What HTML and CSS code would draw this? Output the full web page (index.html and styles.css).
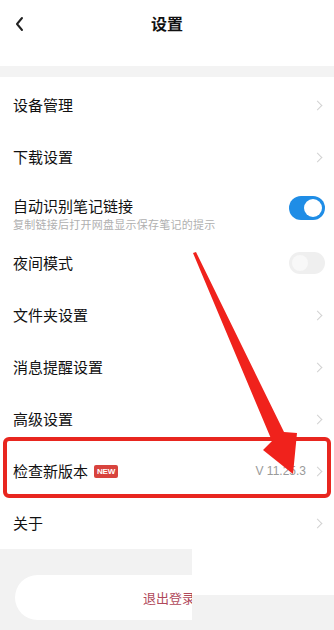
FILE: index.html
```html
<!DOCTYPE html>
<html lang="zh">
<head>
<meta charset="utf-8">
<link rel="stylesheet" href="styles.css">
</head>
<body>
<div class="page">
  <header class="header">
    <svg class="back" width="12" height="16" viewBox="0 0 12 16"><path d="M8 2 L3 8 L8 14" fill="none" stroke="#222" stroke-width="2" stroke-linecap="round" stroke-linejoin="round"/></svg>
    <div class="title">设置</div>
  </header>
  <div class="band"></div>
  <ul class="list">
    <li class="row"><span class="label">设备管理</span><span class="chev"></span></li>
    <li class="row"><span class="label">下载设置</span><span class="chev"></span></li>
    <li class="row row-two">
      <div class="texts">
        <span class="label">自动识别笔记链接</span>
        <span class="sub">复制链接后打开网盘显示保存笔记的提示</span>
      </div>
      <span class="toggle on"><span class="knob"></span></span>
    </li>
    <li class="row"><span class="label">夜间模式</span><span class="toggle off"><span class="knob"></span></span></li>
    <li class="row"><span class="label">文件夹设置</span><span class="chev"></span></li>
    <li class="row"><span class="label">消息提醒设置</span><span class="chev"></span></li>
    <li class="row"><span class="label">高级设置</span><span class="chev"></span></li>
    <li class="row"><span class="label">检查新版本</span><span class="badge">NEW</span><span class="version">V 11.25.3</span><span class="chev"></span></li>
    <li class="row"><span class="label">关于</span><span class="chev"></span></li>
  </ul>
  <div class="footer">
    <div class="logout">退出登录</div>
  </div>
  <div class="patch"></div>
  <div class="highlight"></div>
  <svg class="arrow" width="334" height="630" viewBox="0 0 334 630">
    <polygon points="193,253 196,252 284,432 297,433 293,474 263,450 272,441" fill="#f0221c"/>
  </svg>
</div>
</body>
</html>
```
FILE: styles.css
```css
* { box-sizing: border-box; }
html, body { margin: 0; padding: 0; }
body {
  background: #fff;
  font-family: "Noto Sans CJK SC", "Noto Sans", sans-serif;
  color: #1a1a1a;
}
.page {
  position: relative;
  width: 334px;
  height: 630px;
  overflow: hidden;
  display: flex;
  flex-direction: column;
}
.header {
  height: 66px;
  position: relative;
  display: flex;
  align-items: flex-start;
  justify-content: center;
  padding-top: 10px;
}
.back {
  position: absolute;
  left: 14px;
  top: 16px;
}
.title {
  font-size: 16px;
  font-weight: 700;
  line-height: 26px;
  color: #111;
}
.band {
  height: 11px;
  background: #f3f3f3;
}
.list {
  list-style: none;
  margin: 0;
  padding: 2px 0 0 0;
}
.row {
  height: 52px;
  display: flex;
  align-items: center;
  padding: 0 10px 0 13px;
}
.row-two {
  height: 54px;
  align-items: flex-start;
  padding-top: 13px;
}
.texts {
  display: flex;
  flex-direction: column;
  flex: 1;
}
.label {
  font-size: 15px;
  line-height: 20px;
  color: #111;
}
.row > .label { flex: 0 0 auto; }
.sub {
  font-size: 11px;
  line-height: 14px;
  color: #b0b0b0;
  margin-top: 1px;
  letter-spacing: 0.25px;
}
.chev {
  margin-left: auto;
  width: 7px;
  height: 7px;
  border-top: 1.3px solid #d2d2d2;
  border-right: 1.3px solid #d2d2d2;
  transform: rotate(45deg);
  margin-right: 3px;
}
.version + .chev { margin-left: 8px; }
.badge {
  margin-left: 6px;
  background: #d8433d;
  color: #fff;
  font-family: "Liberation Sans", sans-serif;
  font-size: 8px;
  font-weight: 700;
  line-height: 13px;
  padding: 0 3px;
  border-radius: 2px;
  letter-spacing: -0.2px;
}
.version {
  margin-left: auto;
  font-size: 12px;
  color: #9a9a9a;
  font-family: "Liberation Sans", sans-serif;
}
.toggle {
  margin-left: auto;
  width: 36px;
  height: 24px;
  border-radius: 12px;
  display: flex;
  align-items: center;
  padding: 0 3px;
  margin-right: -1px;
}
.toggle.on {
  background: #1f8de6;
  justify-content: flex-end;
}
.toggle.off {
  background: #efefef;
  height: 22px;
  justify-content: flex-start;
}
.knob {
  width: 18px;
  height: 18px;
  border-radius: 50%;
  background: #fff;
}
.toggle.off .knob { width: 16px; height: 16px; background: #f8f8f8; }
.footer {
  flex: 1;
  background: #f2f2f2;
  padding: 26px 15px 0 15px;
}
.logout {
  height: 45px;
  background: #fff;
  border-radius: 23px;
  display: flex;
  align-items: center;
  justify-content: center;
  font-size: 13px;
  color: #b0485a;
  padding-left: 4px;
}
.patch {
  position: absolute;
  left: 192px;
  top: 549px;
  width: 142px;
  height: 81px;
  background: linear-gradient(#fff 0, #fff 46px, #f2f2f2 46px);
}
.highlight {
  position: absolute;
  left: 3px;
  top: 437px;
  width: 328px;
  height: 61px;
  border: 4px solid #e8261f;
  border-radius: 6px;
}
.arrow {
  position: absolute;
  left: 0;
  top: 0;
}
```
